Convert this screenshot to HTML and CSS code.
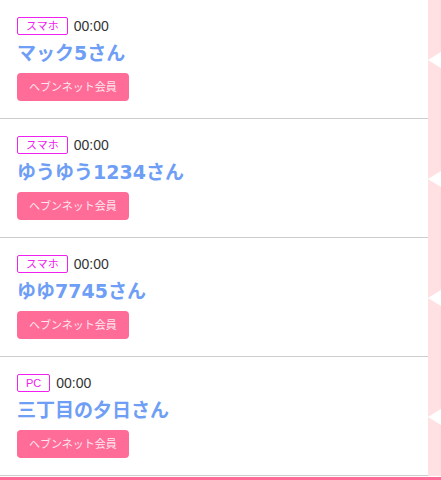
FILE: index.html
```html
<!DOCTYPE html>
<html lang="ja">
<head>
<meta charset="utf-8">
<link rel="stylesheet" href="styles.css">
</head>
<body>
<ul class="list">
  <li class="row">
    <div class="item">
      <div class="meta"><span class="device">スマホ</span><span class="time">00:00</span></div>
      <div class="name">マック5さん</div>
      <span class="member">ヘブンネット会員</span>
    </div>
    <div class="edge"></div>
  </li>
  <li class="row">
    <div class="item">
      <div class="meta"><span class="device">スマホ</span><span class="time">00:00</span></div>
      <div class="name">ゆうゆう1234さん</div>
      <span class="member">ヘブンネット会員</span>
    </div>
    <div class="edge"></div>
  </li>
  <li class="row">
    <div class="item">
      <div class="meta"><span class="device">スマホ</span><span class="time">00:00</span></div>
      <div class="name">ゆゆ7745さん</div>
      <span class="member">ヘブンネット会員</span>
    </div>
    <div class="edge"></div>
  </li>
  <li class="row">
    <div class="item">
      <div class="meta"><span class="device">PC</span><span class="time">00:00</span></div>
      <div class="name">三丁目の夕日さん</div>
      <span class="member">ヘブンネット会員</span>
    </div>
    <div class="edge"></div>
  </li>
</ul>
<div class="bar"></div>
</body>
</html>
```
FILE: styles.css
```css
html, body {
  margin: 0;
  padding: 0;
  background: #fff;
  font-family: "Liberation Sans", "Noto Sans CJK JP", sans-serif;
}
.list {
  list-style: none;
  margin: 0;
  padding: 0;
}
.row {
  display: flex;
}
.item {
  flex: 1;
  height: 119px;
  box-sizing: border-box;
  padding: 17px 0 0 17px;
  border-bottom: 1px solid #cdcdcd;
}
.edge {
  width: 13px;
  background: #ffe1e4;
  display: flex;
  align-items: center;
  justify-content: flex-end;
}
.edge::before {
  content: "";
  width: 0;
  height: 0;
  border-top: 8px solid transparent;
  border-bottom: 8px solid transparent;
  border-right: 13px solid #fff;
}
.meta {
  display: flex;
  align-items: center;
  height: 18px;
}
.device {
  box-sizing: border-box;
  height: 18px;
  padding: 0 8px;
  border: 1px solid #f020f0;
  border-radius: 2px;
  color: #f020f0;
  font-size: 11px;
  line-height: 16px;
}
.time {
  margin-left: 6px;
  font-size: 14px;
  color: #333;
}
.name {
  margin-top: 4px;
  font-family: "DejaVu Sans", "Noto Sans CJK JP", sans-serif;
  font-size: 19px;
  line-height: 28px;
  font-weight: bold;
  color: #6e9ef5;
}
.member {
  display: inline-block;
  margin-top: 6px;
  height: 28px;
  padding: 0 12px;
  border-radius: 4px;
  background: #ff6c98;
  color: #ffe8f0;
  font-size: 11px;
  line-height: 28px;
}
.bar {
  margin-top: 1px;
  height: 10px;
  background: #ff6c98;
}
```
